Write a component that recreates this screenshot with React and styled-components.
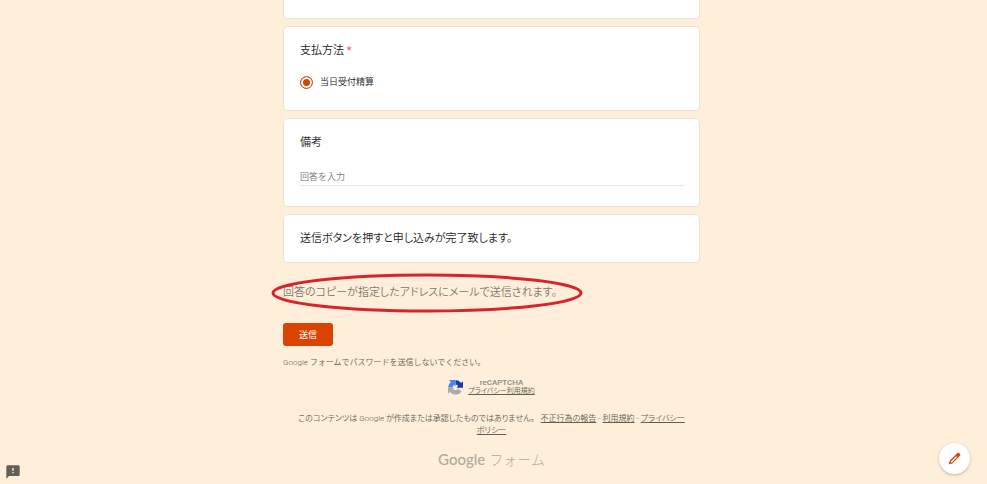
import React from "react";
import styled, { createGlobalStyle } from "styled-components";
import { MdFeedback } from "react-icons/md";

const GlobalStyle = createGlobalStyle`
  *, *::before, *::after { box-sizing: border-box; }
  body {
    margin: 0;
    background: #ffefda;
    color: #202124;
    font-family: Roboto, "Noto Sans CJK JP", sans-serif;
    font-size: 11px;
    font-weight: 350;
    line-height: 16px;
  }
`;

const Page = styled.div`
  padding: 0 4px 12px 0;
`;

const Form = styled.form`
  display: flex;
  flex-direction: column;
  gap: 7px;
  max-width: 417px;
  margin: 0 auto;
`;

const Card = styled.section`
  margin: 0;
  padding: 16px 15px ${(p) => p.$bottom}px 16px;
  background: #fff;
  border: 1px solid #ebe2d4;
  border-radius: 5px;
`;

const CardEnd = styled(Card)`
  height: 19px;
  padding: 0;
  border-top: 0;
  border-radius: 0 0 5px 5px;
`;

const Title = styled.h2`
  display: block;
  margin: 0;
  font-size: 11px;
  font-weight: inherit;
  line-height: 16px;
`;

const Required = styled.span`
  color: #d93025;
`;

const Statement = styled.p`
  margin: 0;
  font-feature-settings: "palt";
`;

const Option = styled.label`
  display: flex;
  align-items: center;
  gap: 7px;
  margin-top: 15px;
  font-size: 9px;
`;

const Radio = styled.input`
  appearance: none;
  width: 13px;
  height: 13px;
  margin: 0;
  border: 1px solid #db4a12;
  border-radius: 50%;
  background: #db4400;
  box-shadow: inset 0 0 0 2px #fff;
`;

const Answer = styled.input`
  display: block;
  width: 100%;
  height: 18px;
  margin-top: 17px;
  padding: 0;
  border: 0;
  border-bottom: 1px solid #e8e8e8;
  outline: 0;
  background: transparent;
  color: #202124;
  font-family: inherit;
  font-size: 9px;
  font-weight: inherit;
  &::placeholder { color: #70757a; opacity: 1; }
`;

const CopyNote = styled.p`
  position: relative;
  align-self: flex-start;
  margin: 15px 0 0;
  color: #80776b;
  font-feature-settings: "palt";
`;

const Ring = styled.svg`
  position: absolute;
  top: -12px;
  left: -12px;
  width: 313px;
  height: 41px;
  pointer-events: none;
`;

const Submit = styled.button`
  align-self: flex-start;
  margin-top: 15px;
  padding: 0 16px;
  height: 23px;
  border: 0;
  border-radius: 3px;
  background: #db4400;
  color: #fff;
  font-family: inherit;
  font-size: 9px;
  font-weight: 400;
`;

const Warning = styled.p`
  margin: 4px 0 0;
  color: #655e54;
  font-size: 8px;
  line-height: 12px;
`;

const Captcha = styled.div`
  display: flex;
  justify-content: center;
  align-items: center;
  gap: 5px;
  margin-top: 2px;
  color: #8d8a86;
  font-size: 8px;
  line-height: 9px;
  text-align: center;
`;

const CaptchaText = styled.div`
  display: flex;
  flex-direction: column;
  align-items: center;
`;

const CaptchaName = styled.span`
  font-weight: 500;
`;

const SmallLink = styled.a`
  color: #655e54;
  font-size: 7px;
  font-feature-settings: "palt";
`;

const Legal = styled.footer`
  margin-top: 10px;
  padding: 0 9px;
  color: #655e54;
  font-size: 8px;
  line-height: 12px;
  text-align: center;
  word-break: keep-all;
  font-feature-settings: "palt";
`;

const LegalLink = styled.a`
  color: inherit;
`;

const Notice = styled.span`
  margin-right: 4px;
`;

const Brand = styled.a`
  display: flex;
  justify-content: center;
  align-items: baseline;
  gap: 4px;
  margin-top: 5px;
  color: #b3aa9b;
  font-size: 14px;
  font-weight: 300;
  line-height: 20px;
  text-decoration: none;
`;

const BrandName = styled.span`
  font-family: Lato, sans-serif;
  font-size: 15px;
  font-weight: 500;
`;

const Edit = styled.button`
  position: fixed;
  right: 17px;
  bottom: 10px;
  display: grid;
  place-items: center;
  width: 31px;
  height: 31px;
  padding: 0;
  border: 0;
  border-radius: 50%;
  background: #fff;
  box-shadow: 0 1px 3px rgba(80, 60, 30, 0.35);
`;

const Feedback = styled.button`
  position: fixed;
  left: 5px;
  bottom: 4px;
  display: grid;
  padding: 0;
  border: 0;
  background: linear-gradient(#fff, #fff) center 3px / 4px 8px no-repeat;
  color: #635d54;
`;

function RecaptchaLogo() {
  return (
    <svg width="15" height="15" viewBox="0 0 64 64" aria-hidden="true">
      <path fill="#1c3aa9" d="M64 32V5l-8 8A32 32 0 0 0 32 0v20c5 0 9 2 11 6l-7 7h28z" />
      <path fill="#4285f4" d="M32 0H4l8 8A32 32 0 0 0 0 32h20c0-5 2-9 6-11l6 6z" />
      <path fill="#ababab" d="M0 32v27l8-8a32 32 0 0 0 50-1L43 36a13 13 0 0 1-22 2l6-6z" />
    </svg>
  );
}

function PencilIcon() {
  return (
    <svg width="15" height="15" viewBox="0 0 24 24" fill="#db4400" aria-hidden="true">
      <path
        fillRule="evenodd"
        d="M16.6 3.2c.8-.8 2-.8 2.8 0l1.4 1.4c.8.8.8 2 0 2.8L8.4 19.8 3 21.2l1.3-5.5zM14.6 8.2 6.6 16.3l-.7 2.2 2.2-.7 8-8.1z"
      />
    </svg>
  );
}

export default function App() {
  return (
    <Page>
      <GlobalStyle />
      <Form onSubmit={(event) => event.preventDefault()}>
        <CardEnd />
        <Card $bottom={20}>
          <Title>
            支払方法 <Required>*</Required>
          </Title>
          <Option>
            <Radio type="radio" name="payment" defaultChecked />
            当日受付精算
          </Option>
        </Card>
        <Card $bottom={20}>
          <Title as="label" htmlFor="remarks">備考</Title>
          <Answer id="remarks" type="text" placeholder="回答を入力" />
        </Card>
        <Card $bottom={15}>
          <Statement>送信ボタンを押すと申し込みが完了致します。</Statement>
        </Card>
        <CopyNote>
          回答のコピーが指定したアドレスにメールで送信されます。
          <Ring viewBox="0 0 313 41" aria-hidden="true">
            <ellipse cx="156" cy="20" rx="154" ry="18" fill="none" stroke="#d9232b" strokeWidth="3" />
          </Ring>
        </CopyNote>
        <Submit type="submit">送信</Submit>
        <Warning>Google フォームでパスワードを送信しないでください。</Warning>
        <Captcha>
          <RecaptchaLogo />
          <CaptchaText>
            <CaptchaName>reCAPTCHA</CaptchaName>
            <SmallLink href="#privacy">プライバシー利用規約</SmallLink>
          </CaptchaText>
        </Captcha>
        <Legal>
          <Notice>このコンテンツは Google が作成または承認したものではありません。</Notice>{" "}
          <LegalLink href="#abuse">不正行為の報告</LegalLink> -{" "}
          <LegalLink href="#terms">利用規約</LegalLink> -{" "}
          <LegalLink href="#policy">プライバシー<wbr />ポリシー</LegalLink>
        </Legal>
        <Brand href="#forms">
          <BrandName>Google</BrandName> フォーム
        </Brand>
      </Form>
      <Feedback type="button" aria-label="問題を報告">
        <MdFeedback size={16} />
      </Feedback>
      <Edit type="button" aria-label="編集">
        <PencilIcon />
      </Edit>
    </Page>
  );
}
